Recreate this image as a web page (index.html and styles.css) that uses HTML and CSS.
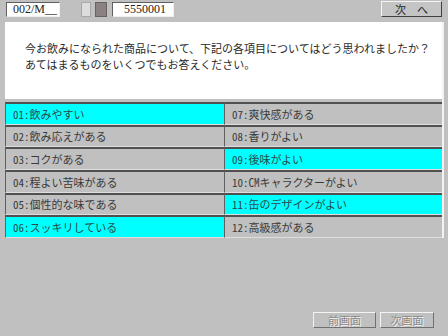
FILE: index.html
```html
<!DOCTYPE html>
<html lang="ja">
  <head>
    <meta charset="UTF-8" />
    <title>アンケート</title>
    <link rel="stylesheet" href="styles.css">
  </head>
  <body>
    <!-- Top bar -->
    <div class="topbar">
      <div class="field code">002/M__</div>
      <span class="knob light"></span>
      <span class="knob dark"></span>
      <div class="field serial">5550001</div>
      <button class="next">次　へ</button>
    </div>

    <div class="main">
      <!-- Question -->
      <div class="question">
        <p>今お飲みになられた商品について、下記の各項目についてはどう思われましたか？</p>
        <p>あてはまるものをいくつでもお答えください。</p>
      </div>

      <!-- Answer grid -->
      <div class="answers">
        <div class="item on">01:飲みやすい</div>
        <div class="item">07:爽快感がある</div>
        <div class="item">02:飲み応えがある</div>
        <div class="item">08:香りがよい</div>
        <div class="item">03:コクがある</div>
        <div class="item on">09:後味がよい</div>
        <div class="item">04:程よい苦味がある</div>
        <div class="item">10:CMキャラクターがよい</div>
        <div class="item">05:個性的な味である</div>
        <div class="item on">11:缶のデザインがよい</div>
        <div class="item on">06:スッキリしている</div>
        <div class="item">12:高級感がある</div>
      </div>
    </div>

    <div class="footer">
      <button class="page prev" disabled>前画面</button>
      <button class="page" disabled>次画面</button>
    </div>
  </body>
</html>
```

FILE: styles.css
```css
body {
  margin: 0;
  width: 448px;
  height: 336px;
  background-color: #c0c0c0;
  font-family: "Noto Sans CJK JP", sans-serif;
  color: #333;
  overflow: hidden;
}

/* Top bar */
.topbar {
  display: flex;
  align-items: flex-start;
  height: 20px;
  box-sizing: border-box;
  padding: 2px 6px 0 6px;
}

.field {
  height: 15px;
  box-sizing: border-box;
  background-color: #fff;
  border-top: 1px solid #606060;
  border-left: 1px solid #606060;
  border-bottom: 1px solid #f0f0f0;
  border-right: 1px solid #f0f0f0;
  font-family: "Liberation Serif", serif;
  font-size: 12px;
  line-height: 13px;
  color: #222;
}

.code {
  width: 54px;
  padding-left: 6px;
}

.serial {
  width: 62px;
  margin-left: 5px;
  padding-left: 11px;
}

.knob {
  display: block;
  height: 15px;
  box-sizing: border-box;
}

.knob.light {
  width: 10px;
  margin-left: 21px;
  background-color: #dcdcdc;
  border: 1px solid #a8a8a8;
}

.knob.dark {
  width: 12px;
  margin-left: 4px;
  background-color: #8a8282;
  border: 1px solid #6a6262;
}

.next {
  margin-left: auto;
  margin-top: -1px;
  width: 61px;
  height: 16px;
  padding: 0;
  background-color: #c4c4c4;
  border-top: 1px solid #f4f4f4;
  border-left: 1px solid #f4f4f4;
  border-bottom: 1px solid #404040;
  border-right: 1px solid #404040;
  font-family: "Noto Sans CJK JP", sans-serif;
  font-size: 11px;
  line-height: 13px;
  color: #222;
}

/* Main area */
.main {
  margin: 2px 4px 0 5px;
  width: 437px;
  border-right: 2px solid #f2f2f2;
}

.question {
  height: 77px;
  box-sizing: border-box;
  background-color: #fff;
  padding: 18px 0 0 20px;
  font-size: 11px;
  color: #2a2a2a;
}

.question p {
  margin: 0;
  line-height: 16px;
}

.answers {
  display: grid;
  grid-template-columns: 219px 218px;
  grid-template-rows: repeat(6, 1fr);
  height: 136px;
  margin-top: 3px;
}

.item {
  display: flex;
  align-items: center;
  box-sizing: border-box;
  padding-left: 7px;
  background-color: #c0c0c0;
  border-top: 2px solid #505050;
  border-left: 1px solid #606060;
  border-bottom: 1px solid #dedede;
  font-size: 11px;
  font-feature-settings: "hwid";
  color: #3a3a3a;
}

.item.on {
  background-color: #00ffff;
  color: #2a4a4a;
}

/* Footer buttons */
.footer {
  display: flex;
  justify-content: flex-end;
  gap: 4px;
  margin-top: 74px;
  padding-right: 14px;
}

.page {
  width: 54px;
  height: 16px;
  padding: 0;
  background-color: #c0c0c0;
  border-top: 1px solid #f4f4f4;
  border-left: 1px solid #f4f4f4;
  border-bottom: 1px solid #707070;
  border-right: 1px solid #707070;
  font-family: "Noto Sans CJK JP", sans-serif;
  font-size: 11px;
  line-height: 13px;
  color: #8a8a8a;
  text-shadow: 1px 1px 0 #f4f4f4;
}

.page.prev {
  width: 63px;
}
```
